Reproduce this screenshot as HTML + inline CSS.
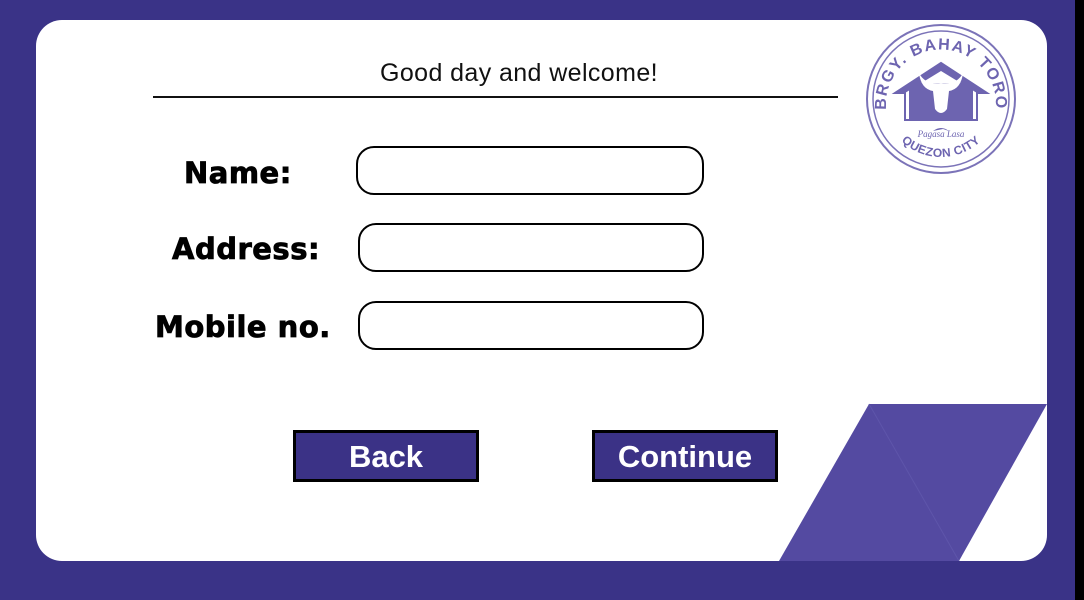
<!DOCTYPE html>
<html><head><style>
body{margin:0;width:1084px;height:600px;background:#3a3387;position:relative;overflow:hidden;font-family:"Liberation Sans",sans-serif}
.blk{position:absolute;left:1075px;top:0;width:9px;height:600px;background:#000}
.card{position:absolute;left:36px;top:20px;width:1011px;height:541px;background:#fff;border-radius:26px;overflow:hidden}
.title{position:absolute;left:153px;width:732px;top:59px;text-align:center;font-size:25px;color:#111;letter-spacing:0.4px}
.line{position:absolute;left:153px;top:96px;width:685px;height:2px;background:#111}
.lab{position:absolute;font-weight:900;font-size:29px;color:#000;letter-spacing:0.5px;font-family:"DejaVu Sans","Liberation Sans",sans-serif;-webkit-text-stroke:0.8px #000}
.in{position:absolute;border:2px solid #000;border-radius:18px;box-sizing:border-box;background:#fff}
.btn{position:absolute;top:430px;width:186px;height:52px;box-sizing:border-box;border:3px solid #000;background:#3b3286;color:#fff;font-weight:bold;font-size:31px;text-align:center;line-height:48px}
</style></head><body>
<div class="blk"></div>
<div class="card">
<svg style="position:absolute;left:0;top:0" width="1011" height="541">
<polygon points="833,384 1011,384 923,541 743,541" fill="#544aa1"/>
<line x1="833" y1="384" x2="923" y2="541" stroke="#5e55aa" stroke-width="1"/>
</svg>
</div>
<div class="title">Good day and welcome!</div>
<div class="line"></div>
<div class="lab" style="left:184px;top:156px">Name:</div>
<div class="lab" style="left:172px;top:232px">Address:</div>
<div class="lab" style="left:155px;top:310px">Mobile no.</div>
<div class="in" style="left:356px;top:146px;width:348px;height:49px"></div>
<div class="in" style="left:358px;top:223px;width:346px;height:49px"></div>
<div class="in" style="left:358px;top:301px;width:346px;height:49px"></div>
<div class="btn" style="left:293px">Back</div>
<div class="btn" style="left:592px">Continue</div>
<svg style="position:absolute;left:865px;top:23px" width="152" height="152" viewBox="0 0 152 152">
<circle cx="76" cy="76" r="74" fill="#fff" stroke="#7b73b8" stroke-width="2"/>
<circle cx="76" cy="76" r="68" fill="none" stroke="#7b73b8" stroke-width="1.5"/>
<defs><path id="ta" d="M22,92 A55,55 0 1 1 130,92"/><path id="tb" d="M18,76 A58,58 0 0 0 134,76"/></defs>
<text font-family="Liberation Sans" font-weight="bold" font-size="16" fill="#6d64b0" letter-spacing="1.5"><textPath href="#ta" startOffset="50%" text-anchor="middle">BRGY. BAHAY TORO</textPath></text>
<text font-family="Liberation Sans" font-weight="bold" font-size="12" fill="#6d64b0" letter-spacing="0.5"><textPath href="#tb" startOffset="50%" text-anchor="middle">QUEZON CITY</textPath></text>
<polygon points="30,70 76,40 122,70 112,70 112,97 40,97 40,70" fill="#fff" stroke="#6d64b0" stroke-width="2"/>
<rect x="44" y="60" width="64" height="37" fill="#6d64b0"/>
<polygon points="30,70 76,40 122,70 112,70 76,48 40,70" fill="#6d64b0"/>
<path d="M54,50 Q56,66 68,68 L70,86 Q76,94 82,86 L84,68 Q96,66 98,50 Q92,62 76,60 Q60,62 54,50Z" fill="#fff"/>
<path d="M68,108 Q76,102 84,108 L78,106Z" fill="#6d64b0"/>
<text x="76" y="114" font-family="Liberation Serif" font-style="italic" font-size="9" fill="#6d64b0" text-anchor="middle">Pagasa Lasa</text>
</svg>
</body></html>
